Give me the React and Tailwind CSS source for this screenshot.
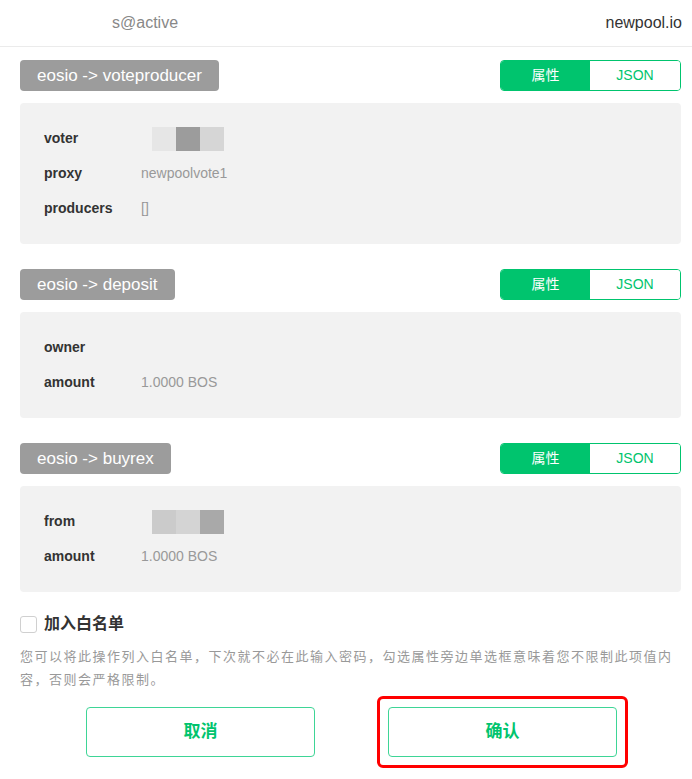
import React, { useState } from 'react';

const font = "font-['Helvetica_Neue','Liberation_Sans','Noto_Sans_CJK_SC',sans-serif]";

const actions = [
    {
        name: 'eosio -> voteproducer',
        rows: [
            { label: 'voter', blur: ['bg-[#e6e6e6]', 'bg-[#9c9c9c]', 'bg-[#d6d6d6]'] },
            { label: 'proxy', value: 'newpoolvote1' },
            { label: 'producers', value: '[]' },
        ],
        height: 'h-[141px]',
    },
    {
        name: 'eosio -> deposit',
        rows: [
            { label: 'owner', value: '' },
            { label: 'amount', value: '1.0000 BOS' },
        ],
        height: 'h-[106px]',
    },
    {
        name: 'eosio -> buyrex',
        rows: [
            { label: 'from', blur: ['bg-[#cbcbcb]', 'bg-[#d4d4d4]', 'bg-[#a9a9a9]'] },
            { label: 'amount', value: '1.0000 BOS' },
        ],
        height: 'h-[106px]',
    },
];

const Toggle = () => {
    const [tab, setTab] = useState('attr');
    return (
        <div className="flex h-[31px] w-[181px] rounded-[4px] border border-[#00c46e] overflow-hidden text-[14px]">
            <button
                onClick={() => setTab('attr')}
                className={`w-[89px] flex items-center justify-center ${tab === 'attr' ? 'bg-[#00c46e] text-white' : 'bg-white text-[#00c46e]'}`}
            >
                属性
            </button>
            <button
                onClick={() => setTab('json')}
                className={`flex-1 flex items-center justify-center ${tab === 'json' ? 'bg-[#00c46e] text-white' : 'bg-white text-[#00c46e]'}`}
            >
                JSON
            </button>
        </div>
    );
};

const ActionBlock = ({ action }) => (
    <div className="flex flex-col">
        <div className="flex items-center justify-between h-[31px]">
            <div className="h-[31px] px-[17px] rounded-[4px] bg-[#9c9c9c] text-white text-[17px] flex items-center">
                {action.name}
            </div>
            <Toggle />
        </div>
        <div className={`mt-[12px] ${action.height} bg-[#f2f2f2] rounded-[4px] px-[24px] flex flex-col justify-center gap-[15px]`}>
            {action.rows.map((row) => (
                <div key={row.label} className="flex items-center h-[20px] text-[14px]">
                    <span className="w-[97px] font-bold text-[#333]">{row.label}</span>
                    {row.blur ? (
                        <div className="flex ml-[11px] h-[24px]">
                            {row.blur.map((c, i) => (
                                <div key={i} className={`w-[24px] h-[24px] ${c}`} />
                            ))}
                        </div>
                    ) : (
                        <span className="text-[#999]">{row.value}</span>
                    )}
                </div>
            ))}
        </div>
    </div>
);

export default function App() {
    const [checked, setChecked] = useState(false);

    return (
        <div className={`w-[692px] h-[779px] bg-white overflow-hidden ${font}`}>
            {/* account header */}
            <div className="h-[47px] border-b border-[#ebebeb] flex items-center justify-between pl-[112px] pr-[10px] text-[16px]">
                <span className="text-[#888]">s@active</span>
                <span className="text-[#333]">newpool.io</span>
            </div>

            <div className="pl-[20px] pr-[11px] pt-[13px] flex flex-col gap-[25px]">
                {actions.map((a) => (
                    <ActionBlock key={a.name} action={a} />
                ))}
            </div>

            {/* whitelist */}
            <div className="pl-[20px] pr-[12px] mt-[20px]">
                <label className="flex items-center gap-[7px] cursor-pointer">
                    <input
                        type="checkbox"
                        checked={checked}
                        onChange={() => setChecked(!checked)}
                        className="appearance-none w-[17px] h-[17px] rounded-[3px] border border-[#d0d0d0] bg-white"
                    />
                    <span className="text-[16px] font-bold text-[#333]">加入白名单</span>
                </label>
                <p className="mt-[9px] text-[13px] leading-[23px] text-[#999] tracking-[1.5px]">
                    您可以将此操作列入白名单，下次就不必在此输入密码，勾选属性旁边单选框意味着您不限制此项值内容，否则会严格限制。
                </p>
            </div>

            {/* buttons */}
            <div className="flex mt-[5px] pl-[86px] gap-[62px] items-center">
                <button className="w-[229px] h-[50px] rounded-[4px] border border-[#3ed596] text-[#00c46e] text-[17px] font-bold">
                    取消
                </button>
                <div className="p-[8px] border-[3px] border-[#ff0000] rounded-[6px]">
                    <button className="w-[229px] h-[50px] rounded-[4px] border border-[#3ed596] text-[#00c46e] text-[17px] font-bold block">
                        确认
                    </button>
                </div>
            </div>
        </div>
    );
}
